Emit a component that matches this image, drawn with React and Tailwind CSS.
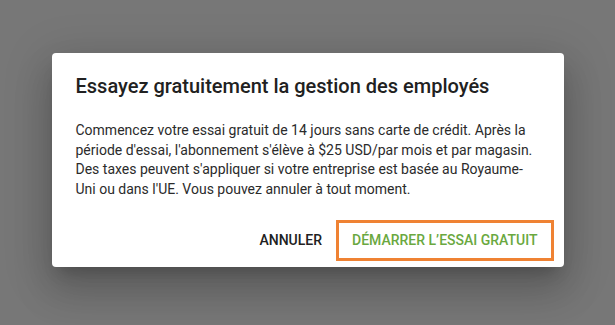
export default function App() {
  return (
    <div
      className="w-[615px] h-[325px] bg-[#777777] flex justify-center pt-[53px]"
      style={{ fontFamily: "Roboto, 'Noto Sans', Arial, sans-serif" }}
    >
      <div className="w-[512px] h-[214px] bg-white rounded-[4px] shadow-[0_11px_15px_-7px_rgba(0,0,0,0.2),0_24px_38px_3px_rgba(0,0,0,0.14),0_9px_46px_8px_rgba(0,0,0,0.12)] flex flex-col">
        <h2 className="pl-[24px] pr-[24px] pt-[19px] text-[20px] leading-[28px] font-medium text-[#212121]">
          Essayez gratuitement la gestion des employés
        </h2>
        <p className="pl-[24px] pr-[24px] mt-[21px] text-[14px] leading-[19.5px] text-[#2b2b2b]">
          Commencez votre essai gratuit de 14 jours sans carte de crédit. Après la période d'essai, l'abonnement s'élève à $25 USD/par mois et par magasin. Des taxes peuvent s'appliquer si votre entreprise est basée au Royaume-Uni ou dans l'UE. Vous pouvez annuler à tout moment.
        </p>
        <div className="mt-auto flex justify-end items-center gap-[14px] pr-[10px] pb-[6px]">
          <button className="text-[14px] font-medium uppercase text-[#212121]">
            Annuler
          </button>
          <button className="h-[41px] border-[3px] border-[#ef8233] px-[13px] text-[14px] font-medium uppercase text-[#6aa83f]">
            Démarrer l’essai gratuit
          </button>
        </div>
      </div>
    </div>
  );
}
